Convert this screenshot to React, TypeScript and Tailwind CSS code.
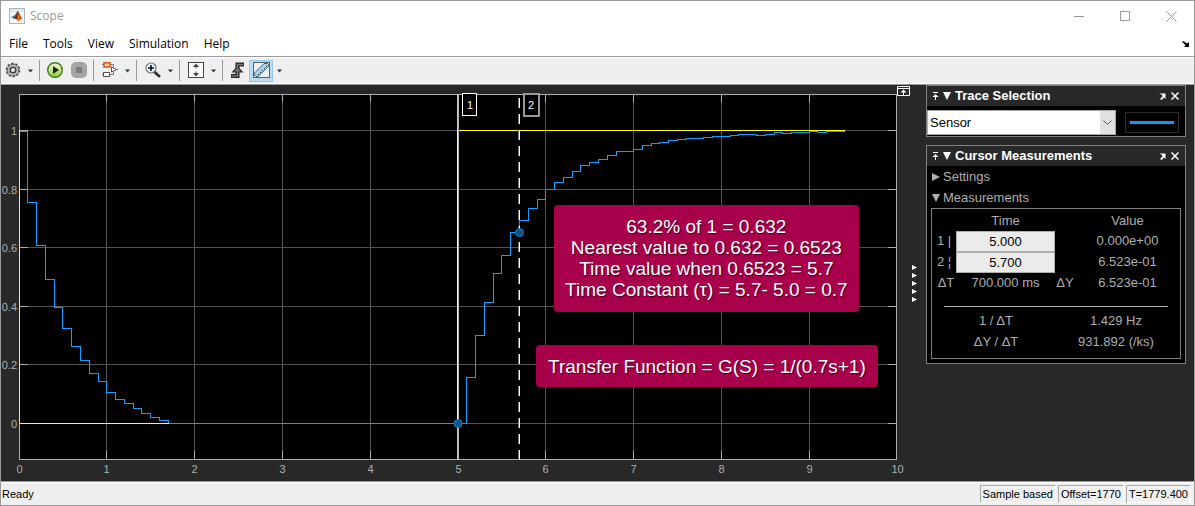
import React from 'react';

const MENU_ITEMS = ['File', 'Tools', 'View', 'Simulation', 'Help'];

// Plot area, in the chart's own units
const LEFT = 18;
const RIGHT = 895;
const TOP = 9;
const BOTTOM = 374;
const ZERO_Y = 338;
const ONE_Y = 45;

const X_TICKS = [0, 1, 2, 3, 4, 5, 6, 7, 8, 9, 10];
const Y_TICKS = [0, 0.2, 0.4, 0.6, 0.8, 1];

const xAt = (t: number) => Math.floor(LEFT + t * 87.8) + 0.5;
const yAt = (v: number) => Math.floor(ZERO_Y + 0.5 - v * 293) + 0.5;

// Sampled sensor levels, one every 0.1 s
const FALLING = [46, 117, 160, 194, 222, 243, 261, 275, 288, 296, 307, 314, 318, 323, 328, 332, 335, 338];
const RISING = [
  338, 292, 250, 217, 188, 170, 147, 135, 123, 114, 104, 97, 92, 86, 80, 77, 74, 70, 66, 66, 64, 60, 58,
  57, 55, 54, 53, 53, 52, 51, 51, 50, 49, 49, 50, 49, 47, 48, 47, 47, 46, 47, 46, 46,
];

const stairs = (levels: number[], start: number) =>
  levels
    .map((y, i) => `${i === 0 ? 'M' : 'H'}${xAt(start + i / 10)}${i === 0 ? ` ${y + 0.5}` : `V${y + 0.5}`}`)
    .join('');

const SENSOR_PATH = `${stairs(FALLING, 0)}H${xAt(5)}${stairs(RISING, 5)}H${xAt(9.4)}`;

const Caret: React.FC<{ label: string }> = ({ label }) => (
  <button aria-label={label}>
    <svg width="5" height="4" viewBox="0 0 5 4" className="block">
      <path d="M0 .5h5L2.500 3.500z" fill="#333" />
    </svg>
  </button>
);

const MatlabIcon = () => (
  <svg width="16" height="16" viewBox="0 0 16 16">
    <rect x=".5" y=".5" width="15" height="15" fill="#f3f6f8" stroke="#a9b4bd" />
    <path d="M1 1h14v3H1z" fill="#dfe7ee" />
    <path d="M2 9l3.500-1.500L7 9l-2 2z" fill="#3b7fb5" />
    <path d="M5.500 7.500C7 6.500 8 3 9 3L7.500 9 5 11z" fill="#27527a" />
    <path d="M9 3c1.500 1 2.500 6 5 8.500-2-1-2.500 0-4.500 2C8.500 12 8 10.500 5 11 7.500 9.500 8 5 9 3z" fill="#d6521c" />
    <path d="M9 3c.5 2 .5 6-.5 9C8 11 7 10.500 5 11 7.500 9.500 8 5 9 3z" fill="#8d2412" />
    <path d="M9.300 6c.7 2 .7 4 .2 6.500l-.8-1z" fill="#f6a52c" />
  </svg>
);

const GearIcon = () => (
  <svg width="17" height="17" viewBox="0 0 17 17" className="block">
    <circle cx="9" cy="8" r="6.600" fill="none" stroke="#4a4a4a" strokeWidth="1.400" strokeDasharray="2.600 1.547" />
    <circle cx="9" cy="8" r="5.600" fill="#c8c8c8" stroke="#666" />
    <circle cx="9" cy="8" r="2.800" fill="#f4f4f4" stroke="#3c3c3c" strokeWidth="1.600" />
  </svg>
);

const PlayIcon = () => (
  <svg width="17" height="17" viewBox="0 0 17 17" className="block">
    <defs>
      <linearGradient id="play" x1="0" y1="0" x2="0" y2="1">
        <stop offset="0" stopColor="#f4fbd8" />
        <stop offset="1" stopColor="#8fd13a" />
      </linearGradient>
    </defs>
    <circle cx="8" cy="8" r="7.300" fill="url(#play)" stroke="#3f7a1c" strokeWidth="1.400" />
    <path d="M6 4v8l6-4z" fill="#222" />
  </svg>
);

const StopIcon = () => (
  <svg width="16" height="17" viewBox="0 0 16 17" className="block">
    <rect width="16" height="16" rx="5" fill="#a5a5a5" />
    <rect x="5" y="5" width="6" height="6" fill="#7d7d7d" />
  </svg>
);

const BlocksIcon = () => (
  <svg width="17" height="17" viewBox="0 0 17 17" className="block">
    <path d="M1 2.500h2M9 2.500h3.500v3M12.500 9.500v3H9M1 12.500h2M15 7.500h2" fill="none" stroke="#777" />
    <rect x="3" y=".8" width="6" height="4.200" fill="#fbd9a8" stroke="#d2571b" strokeWidth="1.500" />
    <rect x="2.500" y="10.500" width="6" height="4" fill="#fff" stroke="#555" />
    <path d="M10.500 5l5 2.500-5 2.500z" fill="#fff" stroke="#555" />
  </svg>
);

const ZoomIcon = () => (
  <svg width="17" height="17" viewBox="0 0 17 17" className="block">
    <path d="M10.500 10l4.500 4" stroke="#333" strokeWidth="3" strokeLinecap="round" />
    <circle cx="7" cy="6" r="5" fill="#e9f2f9" stroke="#777" strokeWidth="1.200" />
    <path d="M4 6h6M7 3v6" stroke="#111" strokeWidth="1.600" />
  </svg>
);

const FitIcon = () => (
  <svg width="17" height="17" viewBox="0 0 17 17" className="block">
    <rect x="1.500" y=".5" width="15" height="15" fill="#fafafa" stroke="#444" />
    <path d="M9 1.500L12 5H6zM9 14.500L6 11h6z" fill="#444" />
    <path d="M9 4v2.500M9 9.500V12" stroke="#444" />
  </svg>
);

const TriggerIcon = () => (
  <svg width="15" height="17" viewBox="0 0 15 17" className="block">
    <path d="M1 14h6.500V2.500H14" fill="none" stroke="#222" strokeWidth="4" />
    <path d="M1.500 10.500L7.500 4l6 6.500z" fill="#222" />
    <path d="M1.500 14h6V2.500h6" fill="none" stroke="#777" strokeWidth="1.500" />
    <path d="M4 9.500l3.500-4 3.500 4z" fill="#777" />
  </svg>
);

const RulerIcon = () => (
  <svg width="17" height="17" viewBox="0 0 17 17" className="block">
    <rect x=".5" y=".5" width="16" height="15" fill="#f1f1f1" stroke="#5c5c5c" />
    <path d="M1.500 11L11 1.500h3.500l1 1v2L5 14.500H3L1.500 13z" fill="#a6d2ea" stroke="#3f6a85" />
    <path d="M6 13l-1-1M8 11l-1-1M10 9L9 8M12 7l-1-1M14 5l-1-1" stroke="#1f3b4d" />
  </svg>
);

const TitleBar = () => (
  <header className="flex h-[30px] items-center bg-white pl-2 font-['Open_Sans',sans-serif] text-[12px] text-[#999]">
    <MatlabIcon />
    <h1 className="ml-[5px] flex-1">Scope</h1>
    <button aria-label="Minimize" className="flex h-full w-[46px] items-center justify-center">
      <svg width="11" height="11" viewBox="0 0 11 11"><path d="M0 5.500h10" stroke="#999" /></svg>
    </button>
    <button aria-label="Maximize" className="flex h-full w-[46px] items-center justify-center">
      <svg width="11" height="11" viewBox="0 0 11 11"><path d="M.5.5h9v9h-9z" fill="none" stroke="#999" /></svg>
    </button>
    <button aria-label="Close" className="flex h-full w-[46px] items-center justify-center">
      <svg width="11" height="11" viewBox="0 0 11 11"><path d="M.5.5l10 10M10.500.5l-10 10" stroke="#999" /></svg>
    </button>
  </header>
);

const MenuBar = () => (
  <nav className="flex h-[25px] items-center gap-[15px] bg-white pl-2 pr-[5px] font-['Open_Sans',sans-serif] text-[12px] text-black">
    {MENU_ITEMS.map((item) => (
      <button key={item}>{item}</button>
    ))}
    <button aria-label="Dock" className="ml-auto">
      <svg width="7" height="6" viewBox="0 0 7 6">
        <path d="M0 1.500L1.500 0 5 2.500 7 1v5H2l1.500-1.500L1.500 2z" fill="#000" />
      </svg>
    </button>
  </nav>
);

const Toolbar = () => (
  <div className="border-y border-[#999]">
    <div className="flex h-[27px] items-center border-y border-white bg-[#efefef]">
      <div className="flex h-[21px] items-center gap-[7px] border-r border-[#999] pl-[3px] pr-[6px]">
        <button aria-label="Configuration"><GearIcon /></button>
        <Caret label="Configuration options" />
      </div>
      <div className="flex h-[21px] items-center gap-[7px] border-r border-[#999] pl-[7px] pr-[6px]">
        <button aria-label="Run"><PlayIcon /></button>
        <button aria-label="Stop"><StopIcon /></button>
      </div>
      <div className="flex h-[21px] items-center gap-[7px] border-r border-[#999] pl-[7px] pr-[6px]">
        <button aria-label="Highlight block"><BlocksIcon /></button>
        <Caret label="Block options" />
      </div>
      <div className="flex h-[21px] items-center gap-[7px] border-r border-[#999] pl-[7px] pr-[6px]">
        <button aria-label="Zoom"><ZoomIcon /></button>
        <Caret label="Zoom options" />
      </div>
      <div className="flex h-[21px] items-center gap-[7px] border-r border-[#999] pl-[7px] pr-[6px]">
        <button aria-label="Scale axes"><FitIcon /></button>
        <Caret label="Scale options" />
      </div>
      <div className="flex items-center gap-1 pl-[7px]">
        <button aria-label="Triggers"><TriggerIcon /></button>
        <button
          aria-label="Cursor measurements"
          aria-pressed="true"
          className="flex h-[22px] w-6 items-center justify-center border border-[#90c8f6] bg-[#bcdcf4]"
        >
          <RulerIcon />
        </button>
        <Caret label="Measurement options" />
      </div>
    </div>
  </div>
);

const Chart = () => (
  <div className="relative min-w-0 flex-1">
    <svg viewBox="0 0 896 396" className="block w-full overflow-visible font-['Liberation_Sans',Arial,sans-serif] text-[11px]">
      <g shapeRendering="crispEdges" fill="none">
        <rect x={LEFT} y={TOP} width={RIGHT - LEFT} height={BOTTOM - TOP} fill="#000" />
        {X_TICKS.slice(1, -1).map((t) => (
          <g key={t}>
            <path d={`M${xAt(t)} ${TOP}V${BOTTOM}`} stroke="#545454" />
            <path d={`M${xAt(t)} ${TOP}v8M${xAt(t)} ${BOTTOM}v-8`} stroke="#afafaf" />
          </g>
        ))}
        {Y_TICKS.map((v) => (
          <g key={v}>
            <path d={`M${LEFT} ${yAt(v)}H${RIGHT}`} stroke="#545454" />
            <path d={`M${LEFT} ${yAt(v)}h9M${RIGHT} ${yAt(v)}h-8`} stroke="#afafaf" />
          </g>
        ))}
        <rect x={LEFT + 0.5} y={TOP + 0.5} width={RIGHT - LEFT} height={BOTTOM - TOP} stroke="#afafaf" />

        {/* sensor response */}
        <path d={SENSOR_PATH} stroke="#139fff" />
        {/* step input */}
        <path
          d={`M${LEFT + 0.5} ${ONE_Y}V${ZERO_Y + 0.5}H${xAt(1.7)}M${xAt(5)} ${ONE_Y + 0.5}H${xAt(9.4)}`}
          stroke="#ffff11"
        />

        {/* cursors */}
        <path d={`M457.500 ${TOP}V${BOTTOM + 1}`} stroke="#b4b4b4" />
        <path d={`M456.500 ${ONE_Y}V${ZERO_Y}`} stroke="#ffffb4" />
        <path d={`M456.500 ${TOP}V${ONE_Y}M456.500 ${ZERO_Y}V${BOTTOM + 1}`} stroke="#c8c8c8" />
        <path d={`M517.500 13V${BOTTOM + 1}`} stroke="#777" strokeDasharray="10 6" />
        <path d={`M518.500 13V${BOTTOM + 1}`} stroke="#fff" strokeDasharray="10 6" />
        <rect x="461.500" y="8.500" width="14" height="22" fill="#000" stroke="#fff" />
        <rect x="523" y="9" width="15" height="22" fill="#000" stroke="#999" strokeWidth="2" />
      </g>
      <circle cx="457" cy="338.500" r="4" fill="#0d5689" stroke="#1a7fc8" />
      <circle cx="518.500" cy="147.500" r="4" fill="#0d5689" stroke="#1a7fc8" />

      <g fill="#fff" textAnchor="middle">
        <text x="469" y="24">1</text>
        <text x="530" y="24">2</text>
      </g>
      <g fill="#afafaf" textAnchor="middle">
        {X_TICKS.map((t) => (
          <text key={t} x={xAt(t)} y="388">{t}</text>
        ))}
      </g>
      <g fill="#afafaf" textAnchor="end">
        {Y_TICKS.map((v) => (
          <text key={v} x="16" y={yAt(v) + 4}>{v}</text>
        ))}
      </g>
    </svg>

    <div className="absolute left-[61.7%] top-[30.3%] flex h-[107px] w-[305px] items-center justify-center whitespace-nowrap rounded bg-[#a9004b] text-center text-[19px] leading-[21px] text-white [text-shadow:1px_1px_1px_rgba(0,0,0,0.6)]">
      <p>
        63.2% of 1 = 0.632
        <br />
        Nearest value to 0.632 = 0.6523
        <br />
        Time value when 0.6523 = 5.7
        <br />
        Time Constant (τ) = 5.7- 5.0 = 0.7
      </p>
    </div>
    <div className="absolute left-[59.7%] top-[65.7%] flex h-[42px] w-[342px] items-center justify-center whitespace-nowrap rounded bg-[#a9004b] text-[19px] leading-[21px] text-white [text-shadow:1px_1px_1px_rgba(0,0,0,0.6)]">
      Transfer Function = G(S) = 1/(0.7s+1)
    </div>
  </div>
);

const PanelHeader: React.FC<{ title: string }> = ({ title }) => (
  <div className="flex h-5 items-center bg-[#282828] pl-[5px] pr-[6px]">
    <button aria-label="Pin panel">
      <svg width="7" height="9" viewBox="0 0 7 9" className="block">
        <path d="M1 .5h5M3.500 3v5" stroke="#fff" />
        <path d="M3.500 2L6.500 5h-6z" fill="#fff" />
      </svg>
    </button>
    <button aria-label="Collapse panel" className="ml-1">
      <svg width="8" height="8" viewBox="0 0 8 8" className="block"><path d="M0 0h8L4 8z" fill="#fff" /></svg>
    </button>
    <h2 className="ml-1 flex-1 text-[13px] font-bold text-white">{title}</h2>
    <button aria-label="Undock panel">
      <svg width="7" height="7" viewBox="0 0 7 7" className="block">
        <path d="M.5.500H6.500V6L5 4.500 2.500 7 1 6l2.500-2.500L3 2z" fill="#fff" />
      </svg>
    </button>
    <button aria-label="Close panel" className="ml-[5px]">
      <svg width="8" height="8" viewBox="0 0 8 8" className="block">
        <path d="M.5.5l7 7M7.500.5l-7 7" stroke="#fff" strokeWidth="1.500" />
      </svg>
    </button>
  </div>
);

const TracePanel = () => (
  <section className="border border-[#808080] bg-black">
    <PanelHeader title="Trace Selection" />
    <div className="flex items-center justify-between pb-px pr-[6px] pt-1">
      <div className="relative">
        <select
          aria-label="Trace"
          className="block h-[25px] w-[189px] appearance-none border border-[#aaa] bg-white pl-[2px] text-[13px] text-black"
        >
          <option>Sensor</option>
        </select>
        <span className="pointer-events-none absolute inset-y-px right-px flex w-[15px] items-center justify-center bg-[#e1e1e1]">
          <svg width="9" height="6" viewBox="0 0 9 6"><path d="M.5.5l4 4 4-4" fill="none" stroke="#555" /></svg>
        </span>
      </div>
      <div className="flex h-[21px] w-[54px] items-center justify-center border border-[#2d2d2d]">
        <div className="h-[3px] w-11 bg-[#1696f2]" />
      </div>
    </div>
  </section>
);

const CursorPanel = () => (
  <section className="border border-[#808080] bg-black pb-1">
    <PanelHeader title="Cursor Measurements" />
    <button className="flex h-[21px] w-full items-center gap-[3px] pl-[5px]">
      <svg width="8" height="8" viewBox="0 0 8 8"><path d="M0 0l8 4-8 4z" fill="#afafaf" /></svg>
      Settings
    </button>
    <button className="flex h-[21px] w-full items-center gap-[3px] pl-[5px]">
      <svg width="8" height="8" viewBox="0 0 8 8"><path d="M0 0h8L4 8z" fill="#afafaf" /></svg>
      Measurements
    </button>
    <div className="mx-1 h-[151px] border border-[#808080]">
      <table className="w-full table-fixed border-collapse text-center">
        <colgroup>
          <col className="w-6" />
          <col className="w-[99px]" />
          <col className="w-5" />
          <col />
        </colgroup>
        <thead>
          <tr className="h-[21px]">
            <td />
            <th className="p-0 pt-[2px] font-normal">Time</th>
            <td />
            <th className="p-0 pt-[2px] font-normal">Value</th>
          </tr>
        </thead>
        <tbody>
          <tr className="h-[21px]">
            <th className="p-0 font-normal"><label htmlFor="cursor1">1 |</label></th>
            <td className="p-0">
              <input
                id="cursor1"
                defaultValue="5.000"
                className="block h-[21px] w-full border border-[#afafaf] bg-[#ebebeb] text-center text-[13px] text-black"
              />
            </td>
            <td />
            <td className="p-0">0.000e+00</td>
          </tr>
          <tr className="h-[21px]">
            <th className="p-0 font-normal"><label htmlFor="cursor2">2 ¦</label></th>
            <td className="p-0">
              <input
                id="cursor2"
                defaultValue="5.700"
                className="block h-[21px] w-full border border-[#afafaf] bg-[#ebebeb] text-center text-[13px] text-black"
              />
            </td>
            <td />
            <td className="p-0">6.523e-01</td>
          </tr>
          <tr className="h-[21px]">
            <th className="p-0 pl-1 font-normal">ΔT</th>
            <td className="p-0">700.000 ms</td>
            <th className="p-0 font-normal">ΔY</th>
            <td className="p-0">6.523e-01</td>
          </tr>
        </tbody>
      </table>
      <hr className="mx-3 mb-[3px] mt-3 border-[#afafaf]" />
      <dl className="grid grid-cols-2 px-1 text-center leading-[21px]">
        <dt>1 / ΔT</dt>
        <dd>1.429 Hz</dd>
        <dt>ΔY / ΔT</dt>
        <dd>931.892 (/ks)</dd>
      </dl>
    </div>
  </section>
);

const StatusBar = () => (
  <footer className="border-t border-[#999] text-[11px] text-black">
    <div className="flex h-[23px] items-center gap-[2px] border-t border-white bg-[#efefef] pl-px pr-[3px]">
      <span className="flex-1">Ready</span>
      <span className="border border-b-white border-l-[#aaa] border-r-white border-t-[#aaa] px-[2px]">Sample based</span>
      <span className="border border-b-white border-l-[#aaa] border-r-white border-t-[#aaa] px-[2px]">Offset=1770</span>
      <span className="border border-b-white border-l-[#aaa] border-r-white border-t-[#aaa] px-[2px]">T=1779.400</span>
    </div>
  </footer>
);

const App: React.FC = () => {
  return (
    <div className="flex min-h-screen flex-col border border-[#999] bg-[#282828] font-['Liberation_Sans',Arial,sans-serif]">
      <TitleBar />
      <MenuBar />
      <Toolbar />
      <main className="flex flex-1 bg-[#282828] pr-2 text-[13px] text-[#afafaf]">
        <Chart />
        <div className="w-[14px] pt-px">
          <button aria-label="Maximize axes" className="block">
            <svg width="13" height="10" viewBox="0 0 13 10" className="block">
              <path d="M.5.5h12v9H.5zM.5 2.500h12M6.500 4v5" fill="none" stroke="#fff" />
              <path d="M6.500 3.500L9.500 6.500h-6z" fill="#fff" />
            </svg>
          </button>
        </div>
        <div className="flex w-[15px] flex-col justify-center gap-[3px] pl-px">
          {[0, 1, 2, 3, 4].map((i) => (
            <svg key={i} width="5" height="5" viewBox="0 0 5 5"><path d="M0 0l5 2.500L0 5z" fill="#fff" /></svg>
          ))}
        </div>
        <aside className="flex w-[260px] flex-col gap-2">
          <TracePanel />
          <CursorPanel />
        </aside>
      </main>
      <StatusBar />
    </div>
  );
};

export default App;
